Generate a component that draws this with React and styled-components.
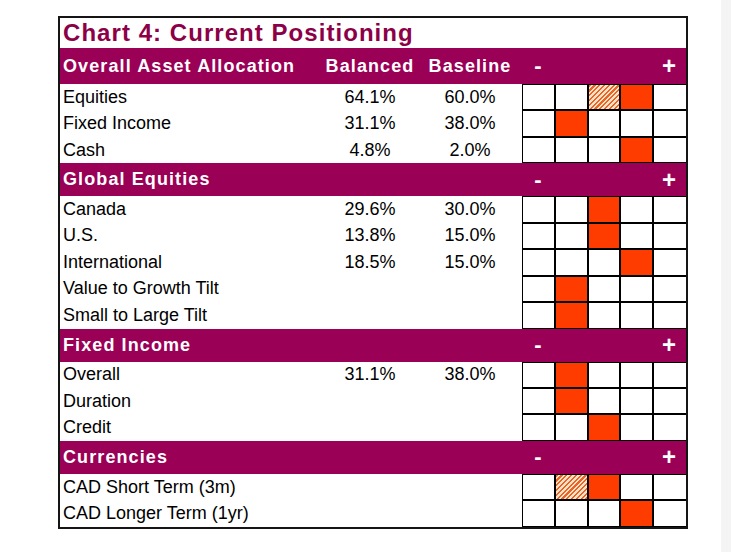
import React from "react";
import styled, { createGlobalStyle } from "styled-components";

const GlobalStyle = createGlobalStyle`
  html, body {
    margin: 0;
    padding: 0;
    background: #fff;
    font-family: "Liberation Sans", Arial, sans-serif;
  }
`;

const sections = [
  {
    title: "Overall Asset Allocation",
    first: true,
    rows: [
      { label: "Equities", bal: "64.1%", base: "60.0%", marks: "..HF." },
      { label: "Fixed Income", bal: "31.1%", base: "38.0%", marks: ".F..." },
      { label: "Cash", bal: "4.8%", base: "2.0%", marks: "...F." },
    ],
  },
  {
    title: "Global Equities",
    rows: [
      { label: "Canada", bal: "29.6%", base: "30.0%", marks: "..F.." },
      { label: "U.S.", bal: "13.8%", base: "15.0%", marks: "..F.." },
      { label: "International", bal: "18.5%", base: "15.0%", marks: "...F." },
      { label: "Value to Growth Tilt", marks: ".F..." },
      { label: "Small to Large Tilt", marks: ".F..." },
    ],
  },
  {
    title: "Fixed Income",
    rows: [
      { label: "Overall", bal: "31.1%", base: "38.0%", marks: ".F..." },
      { label: "Duration", marks: ".F..." },
      { label: "Credit", marks: "..F.." },
    ],
  },
  {
    title: "Currencies",
    rows: [
      { label: "CAD Short Term (3m)", marks: ".HF.." },
      { label: "CAD Longer Term (1yr)", marks: "...F." },
    ],
  },
];

const cols = "262px 96px 104px repeat(5, 1fr)";

const Page = styled.div`
  display: flex;
  height: 552px;
`;

const Main = styled.div`
  flex: 1;
  padding: 16px 0 0 58px;
`;

const SideStrip = styled.div`
  width: 10px;
  background: #f4f4f4;
`;

const Chart = styled.div`
  width: 630px;
  box-sizing: border-box;
  border: 2px solid #151515;
`;

const Title = styled.div`
  height: 30px;
  display: flex;
  align-items: center;
  padding-left: 3px;
  font-size: 24px;
  font-weight: bold;
  letter-spacing: 1.05px;
  color: #8c0047;
`;

const Bar = styled.div`
  display: grid;
  grid-template-columns: ${cols};
  align-items: center;
  height: ${(p) => (p.$first ? 36 : 33)}px;
  background: #9a0056;
  color: #fff;
  font-size: 18px;
  font-weight: bold;
  letter-spacing: 1.1px;
`;

const BarLabel = styled.div`
  padding-left: 3px;
  white-space: nowrap;
`;

const BarHead = styled.div`
  text-align: center;
`;

const Sign = styled.div`
  text-align: center;
  font-size: ${(p) => (p.$plus ? 24 : 22)}px;
  line-height: 1;
  grid-column: ${(p) => (p.$plus ? 8 : 4)};
`;

const Row = styled.div`
  display: grid;
  grid-template-columns: ${cols};
  align-items: stretch;
  height: 26.45px;
  font-size: 18px;
  color: #000;
`;

const Label = styled.div`
  display: flex;
  align-items: center;
  padding-left: 3px;
  white-space: nowrap;
`;

const Value = styled.div`
  display: flex;
  align-items: center;
  justify-content: center;
`;

const fills = {
  F: "#ff3c00",
  H: "repeating-linear-gradient(135deg, #ec6424 0 1.6px, #fbe2c8 1.6px 3.4px)",
  ".": "#fff",
};

const Cell = styled.div`
  box-sizing: border-box;
  border: 1px solid #000;
  border-right-width: ${(p) => (p.$last ? 0 : 1)}px;
  background: ${(p) => fills[p.$mark]};
`;

function Section({ section }) {
  return (
    <>
      <Bar $first={section.first}>
        <BarLabel>{section.title}</BarLabel>
        {section.first ? (
          <>
            <BarHead>Balanced</BarHead>
            <BarHead>Baseline</BarHead>
          </>
        ) : null}
        <Sign>-</Sign>
        <Sign $plus>+</Sign>
      </Bar>
      {section.rows.map((r) => (
        <Row key={r.label}>
          <Label>{r.label}</Label>
          <Value>{r.bal}</Value>
          <Value>{r.base}</Value>
          {r.marks.split("").map((m, i) => (
            <Cell key={i} $mark={m} $last={i === 4} />
          ))}
        </Row>
      ))}
    </>
  );
}

export default function App() {
  return (
    <>
      <GlobalStyle />
      <Page>
        <Main>
          <Chart>
            <Title>Chart 4: Current Positioning</Title>
            {sections.map((s) => (
              <Section key={s.title} section={s} />
            ))}
          </Chart>
        </Main>
        <SideStrip />
      </Page>
    </>
  );
}
